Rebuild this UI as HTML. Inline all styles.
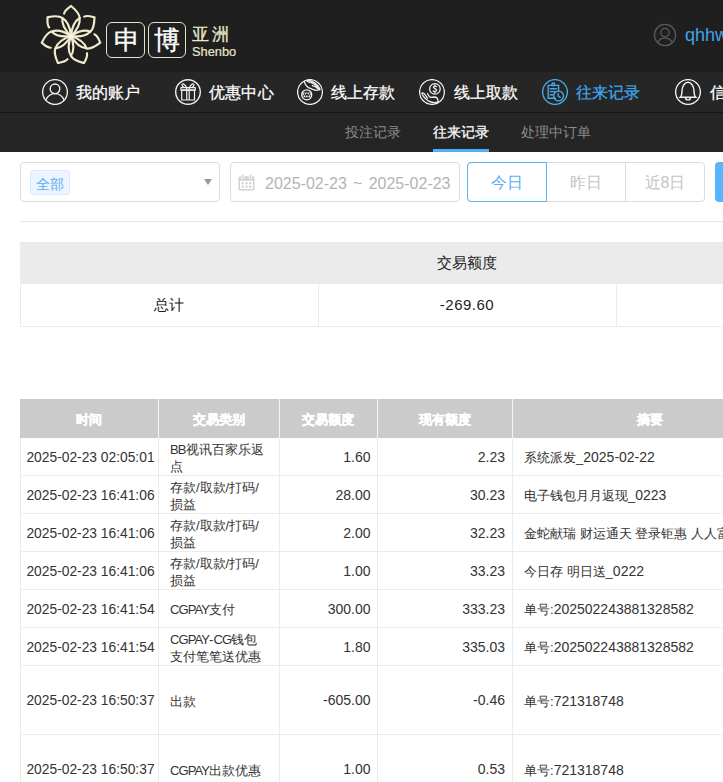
<!DOCTYPE html>
<html><head><meta charset="utf-8">
<style>
*{margin:0;padding:0;box-sizing:border-box}
html,body{width:723px;height:782px;overflow:hidden;background:#fff;font-family:"Liberation Sans",sans-serif;color:#333}
.a{position:absolute;white-space:nowrap}
.nt{position:absolute;font-size:16px;line-height:20px;top:83px;letter-spacing:0.2px;-webkit-text-stroke:0.25px currentColor;color:#fff;white-space:nowrap}
.st{position:absolute;font-size:14px;line-height:20px;top:122px;color:#8c8c8c;white-space:nowrap}
.ic{position:absolute;top:79px;width:26px;height:26px}
.hl{position:absolute;height:1px;background:#ebebeb}
.vl{position:absolute;width:1px;background:#ebebeb}
.cell{position:absolute;font-size:13px;line-height:17px;color:#333;white-space:nowrap}
.num{font-size:14px}
.let{letter-spacing:-0.9px}
</style></head><body>
<div class="a" style="left:0;top:0;width:723px;height:72px;background:#1f1f1f"></div>
<div class="a" style="left:0;top:72px;width:723px;height:40px;background:#262626"></div>
<div class="a" style="left:0;top:112px;width:723px;height:1px;background:#171717"></div>
<div class="a" style="left:0;top:113px;width:723px;height:39px;background:#252525"></div>

<!-- logo -->
<svg class="a" style="left:36px;top:2px" width="70" height="68" viewBox="-35 -34 70 68">
<g fill="none" stroke="#efebcc" stroke-width="2.15" stroke-linecap="round"><path transform="rotate(0.000)" d="M0,0 C3.6,-3.4 9.6,-10.5 8.67,-18.02 C8.3,-23.5 3,-27.5 0,-30 C-2.2,-28.3 -6.2,-26 -6.9,-22.4 M-8.67,-18.02 C-9.6,-10.5 -3.6,-3.4 0,0"/><path transform="rotate(51.429)" d="M0,0 C3.6,-3.4 9.6,-10.5 8.67,-18.02 C8.3,-23.5 3,-27.5 0,-30 C-2.2,-28.3 -6.2,-26 -6.9,-22.4 M-8.67,-18.02 C-9.6,-10.5 -3.6,-3.4 0,0"/><path transform="rotate(102.857)" d="M0,0 C3.6,-3.4 9.6,-10.5 8.67,-18.02 C8.3,-23.5 3,-27.5 0,-30 C-2.2,-28.3 -6.2,-26 -6.9,-22.4 M-8.67,-18.02 C-9.6,-10.5 -3.6,-3.4 0,0"/><path transform="rotate(154.286)" d="M0,0 C3.6,-3.4 9.6,-10.5 8.67,-18.02 C8.3,-23.5 3,-27.5 0,-30 C-2.2,-28.3 -6.2,-26 -6.9,-22.4 M-8.67,-18.02 C-9.6,-10.5 -3.6,-3.4 0,0"/><path transform="rotate(205.714)" d="M0,0 C3.6,-3.4 9.6,-10.5 8.67,-18.02 C8.3,-23.5 3,-27.5 0,-30 C-2.2,-28.3 -6.2,-26 -6.9,-22.4 M-8.67,-18.02 C-9.6,-10.5 -3.6,-3.4 0,0"/><path transform="rotate(257.143)" d="M0,0 C3.6,-3.4 9.6,-10.5 8.67,-18.02 C8.3,-23.5 3,-27.5 0,-30 C-2.2,-28.3 -6.2,-26 -6.9,-22.4 M-8.67,-18.02 C-9.6,-10.5 -3.6,-3.4 0,0"/><path transform="rotate(308.571)" d="M0,0 C3.6,-3.4 9.6,-10.5 8.67,-18.02 C8.3,-23.5 3,-27.5 0,-30 C-2.2,-28.3 -6.2,-26 -6.9,-22.4 M-8.67,-18.02 C-9.6,-10.5 -3.6,-3.4 0,0"/></g>
<circle cx="0" cy="0" r="2.5" fill="#f2f2f0"/>
</svg>
<div class="a" style="left:106px;top:22px;width:39px;height:36px;border:1.7px solid #e6e2c8;border-radius:6px"></div>
<div class="a" style="left:148px;top:22px;width:38px;height:36px;border:1.7px solid #e6e2c8;border-radius:6px"></div>
<div class="a" style="left:107px;top:22px;width:39px;height:36px;font-size:25.5px;line-height:36px;text-align:center;color:#fcfcfc;-webkit-text-stroke:0.4px #fcfcfc">申</div>
<div class="a" style="left:148px;top:22px;width:38px;height:36px;font-size:25.5px;line-height:36px;text-align:center;color:#fcfcfc;-webkit-text-stroke:0.4px #fcfcfc">博</div>
<div class="a" style="left:192px;top:25px;font-size:17px;line-height:20px;letter-spacing:3px;color:#ebe7ca;-webkit-text-stroke:0.3px #ebe7ca">亚洲</div>
<div class="a" style="left:192px;top:44px;font-size:12.8px;line-height:16px;color:#e9e5ca;-webkit-text-stroke:0.2px #e9e5ca">Shenbo</div>

<!-- user -->
<svg class="a" style="left:653px;top:23px" width="24" height="24" viewBox="0 0 24 24">
<g fill="none" stroke="#5a5a5a" stroke-width="1.3"><circle cx="12" cy="12" r="10.6"/><circle cx="12" cy="9.6" r="4.2"/><path d="M4.9,19.5 C6.8,13.6 17.2,13.6 19.1,19.5"/></g>
</svg>
<div class="a" style="left:685px;top:24px;font-size:18px;line-height:22px;color:#3fa3ea">qhhw</div>

<!-- nav icons -->
<svg class="ic" style="left:42px" viewBox="-13 -13 26 26"><g fill="none" stroke="#f0f0f0" stroke-width="1.4">
<circle r="12.4"/><circle cx="0" cy="-3.2" r="4.8"/><path d="M-9.2,8 C-5,-0.5 5,-0.5 9.2,8"/></g></svg>
<div class="nt" style="left:75.5px">我的账户</div>

<svg class="ic" style="left:175px" viewBox="-13 -13 26 26"><g fill="none" stroke="#f0f0f0" stroke-width="1.4"><circle r="12.3"/></g><g fill="none" stroke="#f0f0f0" stroke-width="1.2" stroke-linejoin="round">
<rect x="-7.1" y="-4.3" width="14.4" height="2.5"/><rect x="-6.3" y="-1.8" width="12.8" height="9.8"/>
<path d="M-1.3,-4.3 V8 M1.2,-4.3 V8 M-1.3,-4.3 C-2.5,-6.5 -4.5,-8.6 -5.6,-8 C-6.6,-7.4 -5.5,-5.5 -4,-4.3 M1.2,-4.3 C2.5,-6.5 4.5,-8.6 5.6,-8 C6.6,-7.4 5.5,-5.5 4,-4.3"/></g></svg>
<div class="nt" style="left:209px">优惠中心</div>

<svg class="ic" style="left:297px" viewBox="-13 -13 26 26"><defs><clipPath id="cc"><circle cx="-3.3" cy="2.8" r="4.3"/></clipPath></defs><g fill="none" stroke="#f0f0f0" stroke-width="1.3" stroke-linecap="round">
<circle r="12.4"/><circle cx="-3.3" cy="2.8" r="5"/>
<g clip-path="url(#cc)"><rect x="-8" y="0.6" width="10" height="4.6" fill="#f0f0f0" stroke="none"/><path d="M-6.6,4.4 L-5.4,1.4 L-4.2,4.4 L-3,1.4 L-1.8,4.4 L-0.6,1.4 L0.6,4.4" stroke="#262626" stroke-width="1"/></g>
<path d="M-2.4,-11.8 C2,-11.2 7,-9 10.1,-2.7 M-2.4,-11.8 Q-3.6,-11 -2.4,-10.4 C1.5,-9.8 6,-8 9,-2.2 M2.3,-6.3 C4.5,-6 7,-4.5 9.3,-1.9 M-5.6,-10.6 C-5,-7 -2,-4.2 1,-3.3 C3,-2.6 5,-1.7 7.5,-1.7"/></g></svg>
<div class="nt" style="left:330.7px">线上存款</div>

<svg class="ic" style="left:419px" viewBox="-13 -13 26 26"><g fill="none" stroke="#f0f0f0" stroke-width="1.3" stroke-linecap="round" stroke-linejoin="round">
<circle r="12.4"/><circle cx="2.9" cy="-3.1" r="5.3"/><path d="M4.5,-5.4 C3.8,-6.3 1.5,-6.1 1.5,-4.7 C1.5,-3.3 4.6,-3.4 4.6,-1.8 C4.6,-0.3 2.2,-0.2 1.3,-1 M2.9,-7.2 V-6.2 M2.9,0 V0.9"/>
<path d="M-10.2,1.3 C-8.6,5 -6,8.6 -1,10 C2,10.9 5,10.6 6.2,9.6 M-4.4,1.6 C-3.6,3.4 -3,5 -1.5,5.4 L2.4,5 C4.5,5 6,7 6.2,9.6 M-10.2,1.3 C-9.2,0.2 -7.8,1 -6.6,3.2 L-4.6,6.2"/></g></svg>
<div class="nt" style="left:453.5px">线上取款</div>

<svg class="ic" style="left:542px" viewBox="-13 -13 26 26"><g fill="none" stroke="#46aae8" stroke-width="1.4">
<circle r="12.4"/><path d="M1,6.2 H-6.8 V-6.6 H3.6 V-0.5"/><circle cx="-1.7" cy="-7.6" r="1.4"/>
<path d="M-5.3,-3.3 H1.8 M-5.3,-0.4 H0.6 M-5.3,2.7 H-1.5"/><circle cx="3.6" cy="4" r="4.9"/><path d="M3.2,1.2 V4.2 L5.6,5.6"/></g></svg>
<div class="nt" style="left:575.6px;color:#3fa5ea">往来记录</div>

<svg class="ic" style="left:675px" viewBox="-13 -13 26 26"><g fill="none" stroke="#f0f0f0" stroke-width="1.4">
<circle r="12.4"/><path d="M-7.8,5.2 C-6.5,4 -6,2 -6,-1 C-6,-6 -3,-9.8 0,-9.8 C3,-9.8 6,-6 6,-1 C6,2 6.5,4 7.8,5.2 Z"/><path d="M-2.5,5.4 A2.5,2.5 0 0 0 2.5,5.4"/></g></svg>
<div class="nt" style="left:709.5px">信</div>

<!-- sub nav -->
<div class="st" style="left:344.7px">投注记录</div>
<div class="st" style="left:432.6px;color:#fff;-webkit-text-stroke:0.25px #fff">往来记录</div>
<div class="st" style="left:520.5px">处理中订单</div>
<div class="a" style="left:433px;top:149px;width:56px;height:3px;background:#4fb2f6"></div>

<!-- filter -->
<div class="a" style="left:20px;top:162px;width:200px;height:40px;border:1px solid #dcdcdc;border-radius:4px"></div>
<div class="a" style="left:30px;top:170px;width:40px;height:25px;border:1px solid #d9ecff;background:#ecf5ff;border-radius:3px;font-size:14px;line-height:23px;padding-top:1.5px;text-align:center;color:#5aaef5">全部</div>
<div class="a" style="left:204px;top:179px;width:0;height:0;border-left:4px solid transparent;border-right:4px solid transparent;border-top:6px solid #9a9a9a"></div>
<div class="a" style="left:230px;top:162px;width:230px;height:40px;border:1px solid #dcdcdc;border-radius:4px"></div>
<svg class="a" style="left:238px;top:174px" width="17" height="17" viewBox="0 0 17 17">
<rect x="0.5" y="2.2" width="16" height="14.3" rx="1.6" fill="#d2d2d2"/><rect x="2" y="6.8" width="13" height="8.2" fill="#fff"/>
<rect x="3.3" y="0.3" width="2.6" height="4.6" rx="1.2" fill="#d2d2d2" stroke="#fff" stroke-width="0.9"/><rect x="11.1" y="0.3" width="2.6" height="4.6" rx="1.2" fill="#d2d2d2" stroke="#fff" stroke-width="0.9"/>
<g fill="#d2d2d2"><rect x="3.6" y="8.3" width="2.2" height="2"/><rect x="7.4" y="8.3" width="2.2" height="2"/><rect x="11.2" y="8.3" width="2.2" height="2"/><rect x="3.6" y="11.6" width="2.2" height="2"/><rect x="7.4" y="11.6" width="2.2" height="2"/><rect x="11.2" y="11.6" width="2.2" height="2"/></g></svg>
<div class="a" style="left:265px;top:173.5px;font-size:16px;line-height:20px;color:#b4b4b4;word-spacing:1.8px">2025-02-23 ~ 2025-02-23</div>

<div class="a" style="left:467px;top:162px;width:238px;height:40px;border:1px solid #dcdcdc;border-radius:4px"></div>
<div class="a" style="left:546px;top:162px;width:1px;height:40px;background:#dcdcdc"></div>
<div class="a" style="left:625px;top:162px;width:1px;height:40px;background:#dcdcdc"></div>
<div class="a" style="left:467px;top:162px;width:80px;height:40px;border:1px solid #5cb3f2;border-radius:4px 0 0 4px"></div>
<div class="a" style="left:467px;top:162px;width:80px;font-size:16px;line-height:40px;padding-top:1px;text-align:center;color:#5aaef0">今日</div>
<div class="a" style="left:546px;top:162px;width:80px;font-size:16px;line-height:40px;padding-top:1px;text-align:center;color:#c4c4c4">昨日</div>
<div class="a" style="left:625px;top:162px;width:80px;font-size:16px;line-height:40px;padding-top:1px;text-align:center;color:#c4c4c4">近8日</div>
<div class="a" style="left:715px;top:162px;width:60px;height:40px;background:#56b5fe;border-radius:4px"></div>
<div class="a" style="left:20px;top:221px;width:703px;height:1px;background:#e6e6e6"></div>

<!-- summary -->
<div class="a" style="left:20px;top:242px;width:703px;height:42px;background:#ebebeb"></div>
<div class="a" style="left:318px;top:242px;width:298px;font-size:15px;line-height:42px;text-align:center;color:#222">交易额度</div>
<div class="vl" style="left:20px;top:284px;height:43px"></div>
<div class="vl" style="left:318px;top:284px;height:43px"></div>
<div class="vl" style="left:616px;top:284px;height:43px"></div>
<div class="hl" style="left:20px;top:326px;width:703px"></div>
<div class="a" style="left:20px;top:284px;width:298px;font-size:15px;line-height:42px;text-align:center;color:#222">总计</div>
<div class="a" style="left:318px;top:284px;width:298px;font-size:15px;letter-spacing:0.5px;line-height:42px;text-align:center;color:#222">-269.60</div>
<div class="a" style="left:20px;top:399px;width:703px;height:39px;background:#cbcbcb"></div>
<div class="a" style="left:158px;top:399px;width:1px;height:39px;background:#f4f4f4"></div>
<div class="a" style="left:279px;top:399px;width:1px;height:39px;background:#f4f4f4"></div>
<div class="a" style="left:377px;top:399px;width:1px;height:39px;background:#f4f4f4"></div>
<div class="a" style="left:512px;top:399px;width:1px;height:39px;background:#f4f4f4"></div>
<div class="a" style="left:20px;top:399px;width:138px;font-size:13px;line-height:39px;padding-top:1px;text-align:center;color:#fff;font-weight:bold;-webkit-text-stroke:0.35px #fff">时间</div>
<div class="a" style="left:158px;top:399px;width:121px;font-size:13px;line-height:39px;padding-top:1px;text-align:center;color:#fff;font-weight:bold;-webkit-text-stroke:0.35px #fff">交易类别</div>
<div class="a" style="left:279px;top:399px;width:98px;font-size:13px;line-height:39px;padding-top:1px;text-align:center;color:#fff;font-weight:bold;-webkit-text-stroke:0.35px #fff">交易额度</div>
<div class="a" style="left:377px;top:399px;width:135px;font-size:13px;line-height:39px;padding-top:1px;text-align:center;color:#fff;font-weight:bold;-webkit-text-stroke:0.35px #fff">现有额度</div>
<div class="a" style="left:512px;top:399px;width:276px;font-size:13px;line-height:39px;padding-top:1px;text-align:center;color:#fff;font-weight:bold;-webkit-text-stroke:0.35px #fff">摘要</div>
<div class="vl" style="left:20px;top:438px;height:38px"></div>
<div class="vl" style="left:158px;top:438px;height:38px"></div>
<div class="vl" style="left:279px;top:438px;height:38px"></div>
<div class="vl" style="left:377px;top:438px;height:38px"></div>
<div class="vl" style="left:512px;top:438px;height:38px"></div>
<div class="hl" style="left:20px;top:475px;width:703px"></div>
<div class="a" style="left:21.5px;top:438px;width:138px;height:38px;display:flex;align-items:center;justify-content:center"><span class="cell num" style="position:static;font-size:13.8px">2025-02-23 02:05:01</span></div>
<div class="a" style="left:170px;top:438px;width:108px;height:38px;padding-top:1.5px;display:flex;align-items:center"><span class="cell" style="position:static"><span class="let">BB</span>视讯百家乐返<br>点</span></div>
<div class="a" style="left:279px;top:438px;width:91.5px;height:38px;display:flex;align-items:center;justify-content:flex-end"><span class="cell num" style="position:static">1.60</span></div>
<div class="a" style="left:377px;top:438px;width:128px;height:38px;display:flex;align-items:center;justify-content:flex-end"><span class="cell num" style="position:static">2.23</span></div>
<div class="a" style="left:524px;top:438px;width:260px;height:38px;padding-top:1.5px;display:flex;align-items:center;overflow:hidden"><span class="cell" style="position:static">系统派发_<span class="num">2025-02-22</span></span></div>
<div class="vl" style="left:20px;top:476px;height:38px"></div>
<div class="vl" style="left:158px;top:476px;height:38px"></div>
<div class="vl" style="left:279px;top:476px;height:38px"></div>
<div class="vl" style="left:377px;top:476px;height:38px"></div>
<div class="vl" style="left:512px;top:476px;height:38px"></div>
<div class="hl" style="left:20px;top:513px;width:703px"></div>
<div class="a" style="left:21.5px;top:476px;width:138px;height:38px;display:flex;align-items:center;justify-content:center"><span class="cell num" style="position:static;font-size:13.8px">2025-02-23 16:41:06</span></div>
<div class="a" style="left:170px;top:476px;width:108px;height:38px;padding-top:1.5px;display:flex;align-items:center"><span class="cell" style="position:static">存款/取款/打码/<br>损益</span></div>
<div class="a" style="left:279px;top:476px;width:91.5px;height:38px;display:flex;align-items:center;justify-content:flex-end"><span class="cell num" style="position:static">28.00</span></div>
<div class="a" style="left:377px;top:476px;width:128px;height:38px;display:flex;align-items:center;justify-content:flex-end"><span class="cell num" style="position:static">30.23</span></div>
<div class="a" style="left:524px;top:476px;width:260px;height:38px;padding-top:1.5px;display:flex;align-items:center;overflow:hidden"><span class="cell" style="position:static">电子钱包月月返现_<span class="num">0223</span></span></div>
<div class="vl" style="left:20px;top:514px;height:38px"></div>
<div class="vl" style="left:158px;top:514px;height:38px"></div>
<div class="vl" style="left:279px;top:514px;height:38px"></div>
<div class="vl" style="left:377px;top:514px;height:38px"></div>
<div class="vl" style="left:512px;top:514px;height:38px"></div>
<div class="hl" style="left:20px;top:551px;width:703px"></div>
<div class="a" style="left:21.5px;top:514px;width:138px;height:38px;display:flex;align-items:center;justify-content:center"><span class="cell num" style="position:static;font-size:13.8px">2025-02-23 16:41:06</span></div>
<div class="a" style="left:170px;top:514px;width:108px;height:38px;padding-top:1.5px;display:flex;align-items:center"><span class="cell" style="position:static">存款/取款/打码/<br>损益</span></div>
<div class="a" style="left:279px;top:514px;width:91.5px;height:38px;display:flex;align-items:center;justify-content:flex-end"><span class="cell num" style="position:static">2.00</span></div>
<div class="a" style="left:377px;top:514px;width:128px;height:38px;display:flex;align-items:center;justify-content:flex-end"><span class="cell num" style="position:static">32.23</span></div>
<div class="a" style="left:524px;top:514px;width:260px;height:38px;padding-top:1.5px;display:flex;align-items:center;overflow:hidden"><span class="cell" style="position:static">金蛇献瑞 财运通天 登录钜惠 人人富份</span></div>
<div class="vl" style="left:20px;top:552px;height:38px"></div>
<div class="vl" style="left:158px;top:552px;height:38px"></div>
<div class="vl" style="left:279px;top:552px;height:38px"></div>
<div class="vl" style="left:377px;top:552px;height:38px"></div>
<div class="vl" style="left:512px;top:552px;height:38px"></div>
<div class="hl" style="left:20px;top:589px;width:703px"></div>
<div class="a" style="left:21.5px;top:552px;width:138px;height:38px;display:flex;align-items:center;justify-content:center"><span class="cell num" style="position:static;font-size:13.8px">2025-02-23 16:41:06</span></div>
<div class="a" style="left:170px;top:552px;width:108px;height:38px;padding-top:1.5px;display:flex;align-items:center"><span class="cell" style="position:static">存款/取款/打码/<br>损益</span></div>
<div class="a" style="left:279px;top:552px;width:91.5px;height:38px;display:flex;align-items:center;justify-content:flex-end"><span class="cell num" style="position:static">1.00</span></div>
<div class="a" style="left:377px;top:552px;width:128px;height:38px;display:flex;align-items:center;justify-content:flex-end"><span class="cell num" style="position:static">33.23</span></div>
<div class="a" style="left:524px;top:552px;width:260px;height:38px;padding-top:1.5px;display:flex;align-items:center;overflow:hidden"><span class="cell" style="position:static">今日存 明日送_<span class="num">0222</span></span></div>
<div class="vl" style="left:20px;top:590px;height:38px"></div>
<div class="vl" style="left:158px;top:590px;height:38px"></div>
<div class="vl" style="left:279px;top:590px;height:38px"></div>
<div class="vl" style="left:377px;top:590px;height:38px"></div>
<div class="vl" style="left:512px;top:590px;height:38px"></div>
<div class="hl" style="left:20px;top:627px;width:703px"></div>
<div class="a" style="left:21.5px;top:590px;width:138px;height:38px;display:flex;align-items:center;justify-content:center"><span class="cell num" style="position:static;font-size:13.8px">2025-02-23 16:41:54</span></div>
<div class="a" style="left:170px;top:590px;width:108px;height:38px;padding-top:1.5px;display:flex;align-items:center"><span class="cell" style="position:static"><span class="let">CGPAY</span>支付</span></div>
<div class="a" style="left:279px;top:590px;width:91.5px;height:38px;display:flex;align-items:center;justify-content:flex-end"><span class="cell num" style="position:static">300.00</span></div>
<div class="a" style="left:377px;top:590px;width:128px;height:38px;display:flex;align-items:center;justify-content:flex-end"><span class="cell num" style="position:static">333.23</span></div>
<div class="a" style="left:524px;top:590px;width:260px;height:38px;padding-top:1.5px;display:flex;align-items:center;overflow:hidden"><span class="cell" style="position:static">单号:<span class="num">202502243881328582</span></span></div>
<div class="vl" style="left:20px;top:628px;height:38px"></div>
<div class="vl" style="left:158px;top:628px;height:38px"></div>
<div class="vl" style="left:279px;top:628px;height:38px"></div>
<div class="vl" style="left:377px;top:628px;height:38px"></div>
<div class="vl" style="left:512px;top:628px;height:38px"></div>
<div class="hl" style="left:20px;top:665px;width:703px"></div>
<div class="a" style="left:21.5px;top:628px;width:138px;height:38px;display:flex;align-items:center;justify-content:center"><span class="cell num" style="position:static;font-size:13.8px">2025-02-23 16:41:54</span></div>
<div class="a" style="left:170px;top:628px;width:108px;height:38px;padding-top:1.5px;display:flex;align-items:center"><span class="cell" style="position:static"><span class="let">CGPAY</span>-<span class="let">CG</span>钱包<br>支付笔笔送优惠</span></div>
<div class="a" style="left:279px;top:628px;width:91.5px;height:38px;display:flex;align-items:center;justify-content:flex-end"><span class="cell num" style="position:static">1.80</span></div>
<div class="a" style="left:377px;top:628px;width:128px;height:38px;display:flex;align-items:center;justify-content:flex-end"><span class="cell num" style="position:static">335.03</span></div>
<div class="a" style="left:524px;top:628px;width:260px;height:38px;padding-top:1.5px;display:flex;align-items:center;overflow:hidden"><span class="cell" style="position:static">单号:<span class="num">202502243881328582</span></span></div>
<div class="vl" style="left:20px;top:666px;height:69px"></div>
<div class="vl" style="left:158px;top:666px;height:69px"></div>
<div class="vl" style="left:279px;top:666px;height:69px"></div>
<div class="vl" style="left:377px;top:666px;height:69px"></div>
<div class="vl" style="left:512px;top:666px;height:69px"></div>
<div class="hl" style="left:20px;top:734px;width:703px"></div>
<div class="a" style="left:21.5px;top:666px;width:138px;height:69px;display:flex;align-items:center;justify-content:center"><span class="cell num" style="position:static;font-size:13.8px">2025-02-23 16:50:37</span></div>
<div class="a" style="left:170px;top:666px;width:108px;height:69px;padding-top:1.5px;display:flex;align-items:center"><span class="cell" style="position:static">出款</span></div>
<div class="a" style="left:279px;top:666px;width:91.5px;height:69px;display:flex;align-items:center;justify-content:flex-end"><span class="cell num" style="position:static">-605.00</span></div>
<div class="a" style="left:377px;top:666px;width:128px;height:69px;display:flex;align-items:center;justify-content:flex-end"><span class="cell num" style="position:static">-0.46</span></div>
<div class="a" style="left:524px;top:666px;width:260px;height:69px;padding-top:1.5px;display:flex;align-items:center;overflow:hidden"><span class="cell" style="position:static">单号:<span class="num">721318748</span></span></div>
<div class="vl" style="left:20px;top:735px;height:69px"></div>
<div class="vl" style="left:158px;top:735px;height:69px"></div>
<div class="vl" style="left:279px;top:735px;height:69px"></div>
<div class="vl" style="left:377px;top:735px;height:69px"></div>
<div class="vl" style="left:512px;top:735px;height:69px"></div>
<div class="hl" style="left:20px;top:803px;width:703px"></div>
<div class="a" style="left:21.5px;top:735px;width:138px;height:69px;display:flex;align-items:center;justify-content:center"><span class="cell num" style="position:static;font-size:13.8px">2025-02-23 16:50:37</span></div>
<div class="a" style="left:170px;top:735px;width:108px;height:69px;padding-top:1.5px;display:flex;align-items:center"><span class="cell" style="position:static"><span class="let">CGPAY</span>出款优惠</span></div>
<div class="a" style="left:279px;top:735px;width:91.5px;height:69px;display:flex;align-items:center;justify-content:flex-end"><span class="cell num" style="position:static">1.00</span></div>
<div class="a" style="left:377px;top:735px;width:128px;height:69px;display:flex;align-items:center;justify-content:flex-end"><span class="cell num" style="position:static">0.53</span></div>
<div class="a" style="left:524px;top:735px;width:260px;height:69px;padding-top:1.5px;display:flex;align-items:center;overflow:hidden"><span class="cell" style="position:static">单号:<span class="num">721318748</span></span></div>
</body></html>
